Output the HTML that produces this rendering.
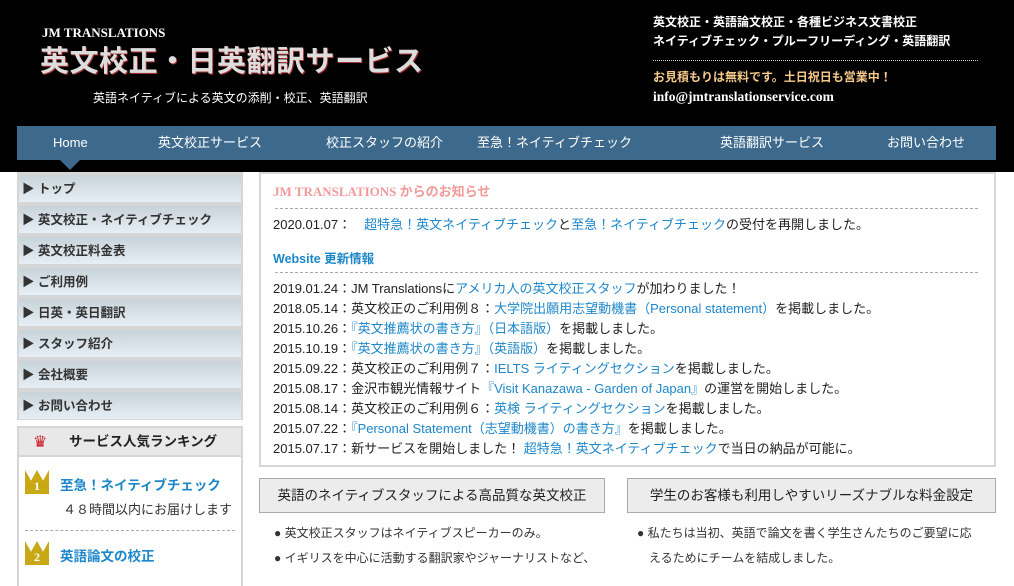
<!DOCTYPE html>
<html><head><meta charset="utf-8"><style>
*{margin:0;padding:0;box-sizing:border-box}
body{width:1014px;height:575px;overflow:hidden;background:#fff;font-family:"Liberation Sans","Noto Sans CJK JP",sans-serif;font-size:13px;color:#222;position:relative}
.hdr{position:absolute;left:0;top:0;width:1014px;height:172px;background:#000}
.a{position:absolute;white-space:nowrap}
.nav{position:absolute;left:17px;top:126px;width:979px;height:34px;background:#3d6a8c}
.nav span{position:absolute;top:8px;color:#fff;font-size:13px;line-height:18px}
.tri{position:absolute;left:60px;top:160px;border-left:10px solid transparent;border-right:10px solid transparent;border-top:10px solid #3d6a8c}
.side{position:absolute;left:17px;top:172px;width:226px;height:248px;background:#d6d6d6}
.side div{position:absolute;left:2px;width:222px;height:27px;background:linear-gradient(#c8d2d9,#e6eff5);font-weight:bold;font-size:12.5px;line-height:18px;color:#333;padding:5px 0 0 3px}
.rank{position:absolute;left:17px;top:426px;width:226px;height:160px;border:2px solid #d6d6d6;border-bottom:none}
.main{position:absolute;left:259px;top:172px;width:737px;height:295px;border:2px solid #d8d8d8}
.dash{position:absolute;left:14px;width:703px;border-top:1px dashed #aaa}
.l{color:#1d87c9}
.box{position:absolute;height:35px;background:#ececec;border:1px solid #aaa;font-size:13.5px;line-height:18px;padding:8px 0 0 0;text-align:center;color:#222;white-space:nowrap}
</style></head><body>
<div class="hdr"></div>
<div class="a" style="left:42px;top:25px;color:#fff;font:bold 13px 'Liberation Serif',serif">JM TRANSLATIONS</div>
<div class="a" style="left:40px;top:44px;color:#ddd;font-weight:bold;font-size:29px;line-height:36px;letter-spacing:0.5px;text-shadow:1px 1px 0 #a33">英文校正・日英翻訳サービス</div>
<div class="a" style="left:93px;top:89px;color:#fff;font-size:12px">英語ネイティブによる英文の添削・校正、英語翻訳</div>
<div class="a" style="left:653px;top:13px;color:#fff;font-size:12px;font-weight:bold;line-height:19px">英文校正・英語論文校正・各種ビジネス文書校正<br>ネイティブチェック・プルーフリーディング・英語翻訳</div>
<div class="a" style="left:653px;top:60px;width:325px;border-top:1px dotted #ccc"></div>
<div class="a" style="left:653px;top:68px;color:#f5c98a;font-size:12px;font-weight:bold">お見積もりは無料です。土日祝日も営業中！</div>
<div class="a" style="left:653px;top:89px;color:#fff;font:bold 13.5px 'Liberation Serif',serif">info@jmtranslationservice.com</div>
<div class="nav"><span style="left:36px">Home</span><span style="left:141px">英文校正サービス</span><span style="left:309px">校正スタッフの紹介</span><span style="left:460px">至急！ネイティブチェック</span><span style="left:703px">英語翻訳サービス</span><span style="left:870px">お問い合わせ</span></div>
<div class="tri"></div>
<div class="side">
<div style="top:3px">▶ トップ</div><div style="top:34px">▶ 英文校正・ネイティブチェック</div><div style="top:65px">▶ 英文校正料金表</div><div style="top:96px">▶ ご利用例</div><div style="top:127px">▶ 日英・英日翻訳</div><div style="top:158px">▶ スタッフ紹介</div><div style="top:189px">▶ 会社概要</div><div style="top:220px">▶ お問い合わせ</div>
</div>
<div class="rank">
<div style="height:29px;background:#e8e8e8;border-bottom:2px solid #d6d6d6;font-size:13.5px;line-height:18px;font-weight:bold;padding:5px 0 0 50px;color:#222">サービス人気ランキング</div>
<div class="a" style="left:14px;top:4px;color:#c8141c;font-size:16px">♛</div>
<div class="a" style="left:6px;top:42px;width:24px;height:24px;background:#c8a814;color:#fff;font:bold 12px serif;text-align:center;padding-top:9px;clip-path:polygon(0 0,25% 45%,50% 0,75% 45%,100% 0,100% 100%,0 100%)">1</div>
<div class="a" style="left:41px;top:46px;color:#1d87c9;font-size:13.5px;font-weight:bold">至急！ネイティブチェック</div>
<div class="a" style="left:44px;top:71px;font-size:13px;color:#333">４８時間以内にお届けします</div>
<div class="a" style="left:6px;top:102px;width:210px;border-top:1px dashed #aaa"></div>
<div class="a" style="left:6px;top:113px;width:24px;height:24px;background:#c8a814;color:#fff;font:bold 12px serif;text-align:center;padding-top:9px;clip-path:polygon(0 0,25% 45%,50% 0,75% 45%,100% 0,100% 100%,0 100%)">2</div>
<div class="a" style="left:41px;top:117px;color:#1d87c9;font-size:13.5px;font-weight:bold">英語論文の校正</div>
</div>
<div class="main">
<div class="a" style="left:12px;top:7px;color:#f29a9a;font:bold 13px 'Liberation Serif','Noto Sans CJK JP',serif">JM TRANSLATIONS からのお知らせ</div>
<div class="dash" style="top:34px"></div>
<div class="a" style="left:12px;top:42px;line-height:18px">2020.01.07：　<span class="l">超特急！英文ネイティブチェック</span>と<span class="l">至急！ネイティブチェック</span>の受付を再開しました。</div>
<div class="a l" style="left:12px;top:74px;font-weight:bold;font-size:12.5px">Website 更新情報</div>
<div class="dash" style="top:98px"></div>
<div class="a" style="left:12px;top:105px;line-height:20px">2019.01.24：JM Translationsに<span class="l">アメリカ人の英文校正スタッフ</span>が加わりました！<br>2018.05.14：英文校正のご利用例８：<span class="l">大学院出願用志望動機書（Personal statement）</span>を掲載しました。<br>2015.10.26：<span class="l">『英文推薦状の書き方』（日本語版）</span>を掲載しました。<br>2015.10.19：<span class="l">『英文推薦状の書き方』（英語版）</span>を掲載しました。<br>2015.09.22：英文校正のご利用例７：<span class="l">IELTS ライティングセクション</span>を掲載しました。<br>2015.08.17：金沢市観光情報サイト<span class="l">『Visit Kanazawa - Garden of Japan』</span>の運営を開始しました。<br>2015.08.14：英文校正のご利用例６：<span class="l">英検 ライティングセクション</span>を掲載しました。<br>2015.07.22：<span class="l">『Personal Statement（志望動機書）の書き方』</span>を掲載しました。<br>2015.07.17：新サービスを開始しました！ <span class="l">超特急！英文ネイティブチェック</span>で当日の納品が可能に。</div>
</div>
<div class="box" style="left:259px;top:478px;width:346px">英語のネイティブスタッフによる高品質な英文校正</div>
<div class="box" style="left:627px;top:478px;width:369px">学生のお客様も利用しやすいリーズナブルな料金設定</div>
<div class="a" style="left:274px;top:521px;font-size:12px;line-height:25px;color:#333">● 英文校正スタッフはネイティブスピーカーのみ。<br>● イギリスを中心に活動する翻訳家やジャーナリストなど、</div>
<div class="a" style="left:637px;top:521px;font-size:12px;line-height:25px;color:#333">● 私たちは当初、英語で論文を書く学生さんたちのご要望に応<br>　えるためにチームを結成しました。</div>
</body></html>
